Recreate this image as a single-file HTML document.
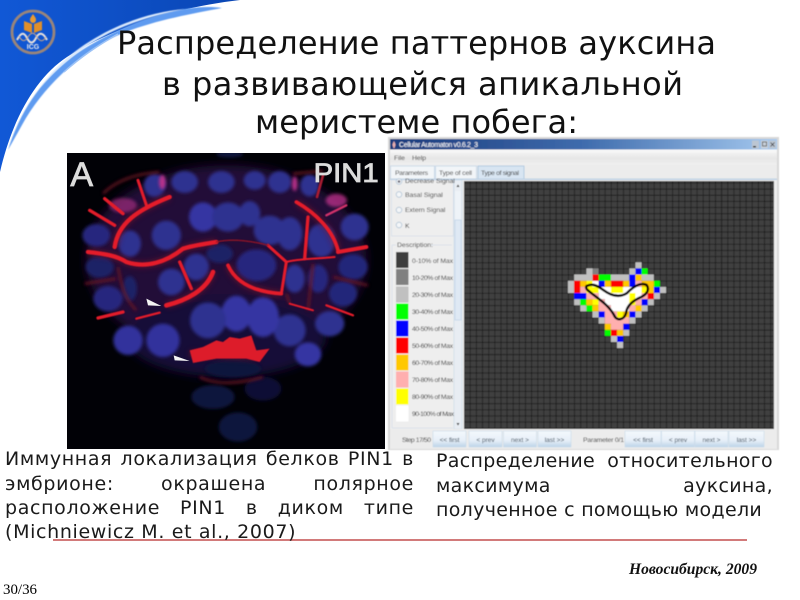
<!DOCTYPE html>
<html lang="ru"><head><meta charset="utf-8"><title>Распределение паттернов ауксина</title>
<style>
html,body{margin:0;padding:0;background:#fff;width:800px;height:600px;overflow:hidden}
svg{position:absolute;left:0;top:0}
.t{font-family:"DejaVu Sans","Liberation Sans",sans-serif;fill:#111;filter:blur(.35px)}
.s{font-family:"Liberation Sans",sans-serif;font-size:6.8px;fill:#333}
.b{font-family:"Liberation Sans",sans-serif;font-size:6.5px;fill:#345;text-anchor:middle}
.j{position:absolute;font-family:"DejaVu Sans","Liberation Sans",sans-serif;font-size:19px;letter-spacing:.65px;line-height:20px;color:#1a1a1a;text-align:justify;text-align-last:justify;white-space:nowrap;filter:blur(.35px)}
.r{letter-spacing:.32px}
</style></head><body>
<svg width="800" height="600" viewBox="0 0 800 600" xmlns="http://www.w3.org/2000/svg">
<defs>
<linearGradient id="bg" x1="0" y1="0" x2="1" y2="0"><stop offset="0" stop-color="#1158d6"/><stop offset="1" stop-color="#0a46b4"/></linearGradient>
<linearGradient id="tb" x1="0" y1="0" x2="1" y2="0"><stop offset="0" stop-color="#1a3a7c"/><stop offset=".5" stop-color="#3f6cad"/><stop offset="1" stop-color="#a5c9ef"/></linearGradient>
<linearGradient id="mb" x1="0" y1="0" x2="0" y2="1"><stop offset="0" stop-color="#fafafa"/><stop offset=".6" stop-color="#e6e6e6"/><stop offset="1" stop-color="#efefef"/></linearGradient>
<linearGradient id="bt" x1="0" y1="0" x2="0" y2="1"><stop offset="0" stop-color="#f4f8fc"/><stop offset=".6" stop-color="#e6eff8"/><stop offset="1" stop-color="#bcd3e8"/></linearGradient>
<pattern id="gr" x="0" y="0" width="6.13" height="6.13" patternUnits="userSpaceOnUse" patternTransform="translate(568 262.3)">
<rect width="6.13" height="6.13" fill="#404040"/><path d="M0 0H6.13M0 0V6.13" stroke="#181818" stroke-width="1.4"/></pattern>
<filter id="b1" x="-30%" y="-30%" width="160%" height="160%"><feGaussianBlur stdDeviation="4.5"/></filter>
<filter id="b2" x="-30%" y="-30%" width="160%" height="160%"><feGaussianBlur stdDeviation="1.6"/></filter>
<filter id="b3" x="-50%" y="-50%" width="200%" height="200%"><feGaussianBlur stdDeviation="14"/></filter>
<filter id="b4" x="-30%" y="-30%" width="160%" height="160%"><feGaussianBlur stdDeviation="9"/></filter>
<filter id="sb"><feGaussianBlur stdDeviation=".4"/></filter>
</defs>

<path d="M0 0H240C170 8 110 30 67 57C35 78 12 120 0 172Z" fill="url(#bg)"/>
<path d="M222 8C190 14 145 22 112 38C78 55 42 88 22 125L8 150C22 105 48 72 82 50C122 25 180 2 222 8Z" fill="#5f9bf0" filter="url(#sb)"/>
<path d="M185 9C150 16 118 26 90 44C72 56 55 70 40 88C58 62 82 44 110 30C135 18 160 11 185 9Z" fill="#d8e8fc" filter="url(#sb)"/>
<path d="M118 34C100 44 82 56 64 72" stroke="#9cc2f6" stroke-width="1.5" fill="none"/>

<g filter="url(#sb)">
<circle cx="33" cy="32" r="21" fill="none" stroke="#9a857a" stroke-width="2.8"/>
<path d="M24 21l8 3v9l-8-3zM42 21l-8 3v9l8-3z" fill="#e08f2c"/>
<path d="M33 14c2 3 3 4 3 6a3 3 0 0 1-6 0c0-2 1-3 3-6z" fill="#e89a30"/>
<path d="M17 40c4-8 7-8 10-2s6 6 9 0 7-6 11 2" fill="none" stroke="#e8e2de" stroke-width="2"/>
<path d="M19 36c3 6 6 6 9 1s6-5 9 0 6 5 9 0" fill="none" stroke="#c9a68a" stroke-width="1"/>
<text x="33" y="49" text-anchor="middle" font-family="Liberation Sans,sans-serif" font-size="7" font-weight="bold" fill="#eee">ICG</text>
</g>

<g class="t" font-size="32">
<text x="117" y="54" textLength="599" lengthAdjust="spacing">Распределение паттернов ауксина</text>
<text x="162" y="95" textLength="521" lengthAdjust="spacing">в развивающейся апикальной</text>
<text x="255" y="133" textLength="323" lengthAdjust="spacing">меристеме побега:</text>
</g>

<!-- micrograph -->
<rect x="67" y="153" width="318" height="296" fill="#010106"/>
<svg x="67" y="153" width="318" height="296" viewBox="22 8 954 888">
<g filter="url(#b3)">
<ellipse cx="500" cy="330" rx="420" ry="285" fill="#221038"/>
<ellipse cx="500" cy="560" rx="300" ry="120" fill="#140c38"/>
</g>
<g fill="#2f3190" filter="url(#b1)">
<ellipse cx="285" cy="105" rx="32" ry="35"/><ellipse cx="375" cy="95" rx="40" ry="33"/><ellipse cx="485" cy="95" rx="40" ry="33"/><ellipse cx="585" cy="90" rx="33" ry="28"/><ellipse cx="660" cy="95" rx="35" ry="33"/><ellipse cx="750" cy="105" rx="28" ry="33"/><ellipse cx="885" cy="230" rx="42" ry="40"/><ellipse cx="785" cy="270" rx="42" ry="50"/><ellipse cx="880" cy="350" rx="44" ry="38" fill="#24267a"/><ellipse cx="850" cy="430" rx="42" ry="38" fill="#24267a"/><ellipse cx="810" cy="520" rx="44" ry="38"/><ellipse cx="745" cy="612" rx="40" ry="36" fill="#3436a2"/><ellipse cx="690" cy="540" rx="48" ry="48"/><ellipse cx="610" cy="500" rx="48" ry="60" fill="#3436a2"/><ellipse cx="530" cy="490" rx="45" ry="54" fill="#3436a2"/><ellipse cx="445" cy="510" rx="54" ry="54"/><ellipse cx="310" cy="570" rx="50" ry="50" fill="#31339c"/><ellipse cx="205" cy="570" rx="44" ry="44" fill="#31339c"/><ellipse cx="145" cy="445" rx="44" ry="38" fill="#26287e"/><ellipse cx="120" cy="350" rx="42" ry="32" fill="#1e2066"/><ellipse cx="110" cy="255" rx="42" ry="34" fill="#26287e"/><ellipse cx="210" cy="280" rx="34" ry="40"/><ellipse cx="320" cy="255" rx="44" ry="44"/><ellipse cx="430" cy="200" rx="42" ry="44" fill="#3436a2"/><ellipse cx="505" cy="200" rx="48" ry="44"/><ellipse cx="570" cy="190" rx="32" ry="38"/><ellipse cx="630" cy="240" rx="48" ry="44"/><ellipse cx="690" cy="250" rx="38" ry="50"/><ellipse cx="410" cy="350" rx="38" ry="40"/><ellipse cx="335" cy="395" rx="40" ry="40"/><ellipse cx="210" cy="415" rx="22" ry="38" fill="#1e2066"/><ellipse cx="590" cy="345" rx="60" ry="48" fill="#26287e"/><ellipse cx="480" cy="310" rx="40" ry="28" fill="#1e2066"/><ellipse cx="705" cy="385" rx="30" ry="42"/><ellipse cx="775" cy="385" rx="30" ry="42" fill="#26287e"/><ellipse cx="460" cy="740" rx="65" ry="36" fill="#11133c"/><ellipse cx="610" cy="715" rx="55" ry="36" fill="#0e1034"/><ellipse cx="535" cy="830" rx="58" ry="44" fill="#11133c"/><ellipse cx="520" cy="655" rx="84" ry="26" fill="#11133c"/><ellipse cx="510" cy="12" rx="40" ry="10" fill="#11133c"/>
</g>
<g fill="#b8308a" filter="url(#b1)"><ellipse cx="190" cy="165" rx="42" ry="22" opacity=".6"/><ellipse cx="308" cy="95" rx="10" ry="22"/><ellipse cx="705" cy="100" rx="8" ry="22"/><ellipse cx="830" cy="150" rx="32" ry="20" opacity=".8"/></g>
<g fill="none" stroke="#7a1428" filter="url(#b4)" stroke-width="20" opacity=".55">
<path d="M165 290C175 220 230 180 330 140M85 305C130 310 170 315 200 335C260 355 320 335 370 295C400 285 440 280 470 275M320 465C380 450 440 420 460 365M505 345C530 400 590 425 665 430M710 155C770 190 820 240 835 300"/>
<path d="M390 610L600 620"/>
</g>
<g fill="none" stroke="#6c1224" filter="url(#b1)" stroke-width="7">
<path d="M130 130C170 90 230 70 300 65M75 400L170 385M820 380L925 405M420 680C470 705 540 700 610 680M700 70L790 62"/>
<path d="M175 350C185 400 190 440 230 480M680 430L690 460M760 340L745 480"/>
</g>
<g fill="none" stroke="#e41c2c" stroke-linecap="round" filter="url(#b2)">
<path d="M165 290C175 220 230 180 330 140" stroke-width="13"/>
<path d="M235 90L262 170" stroke-width="9"/><path d="M135 145L190 190" stroke-width="10"/><path d="M90 180L165 225" stroke-width="10"/>
<path d="M85 305C130 310 170 315 200 335C260 355 320 335 370 295C400 285 440 280 470 275" stroke-width="13"/>
<path d="M360 335L395 415" stroke-width="10"/>
<path d="M320 465C380 450 440 420 460 365" stroke-width="14"/>
<path d="M505 345C530 400 590 425 665 430" stroke-width="11"/>
<path d="M625 285L680 335L665 430" stroke-width="9"/>
<path d="M680 335C710 325 780 325 825 320" stroke-width="6"/>
<path d="M735 325L745 200" stroke-width="10"/>
<path d="M710 155C770 190 820 240 835 300" stroke-width="11"/>
<path d="M835 305L920 290" stroke-width="12"/>
<path d="M115 503L190 485" stroke-width="10"/><path d="M230 505L300 487" stroke-width="7"/>
<path d="M690 460L760 480" stroke-width="6"/><path d="M800 465L880 495" stroke-width="7"/>
<path d="M470 275C520 262 590 275 625 285" stroke-width="4" stroke="#8e1626"/>
<path d="M790 75L772 140" stroke-width="8" stroke="#a81a30"/>
<path d="M860 165L800 195" stroke-width="7" stroke="#d0306a"/>
</g>
<path d="M390 600L430 590L470 570L490 575L510 560L540 565L575 555L590 600L630 595L600 635L560 625L470 625L400 638Z" fill="#dd1e2c" filter="url(#b2)"/>
<path d="M260 445L305 467L265 465ZM342 615L390 632L345 630Z" fill="#f4f4f4"/>
<g font-family="Liberation Sans,sans-serif" fill="#dcdcdc" stroke="#dcdcdc" stroke-width="2.500" style="filter:blur(.7px)">
<text x="32" y="107" font-size="102">A</text>
<text x="762" y="95" font-size="80" textLength="195" lengthAdjust="spacingAndGlyphs">PIN1</text>
</g>
</svg>

<!-- application window -->
<g filter="url(#sb)">
<rect x="388" y="137" width="391" height="313" fill="#d8d8d8"/>
<rect x="390" y="139" width="387" height="310" fill="#eeeeee"/>
<rect x="390" y="139" width="387" height="10.500" fill="url(#tb)"/>
<path d="M394 141c1 2 1.500 3 1.500 4l-1 3h-1l-1-3c0-1 .5-2 1.500-4z" fill="#e8b0b0"/>
<text x="399" y="147" font-family="Liberation Sans,sans-serif" font-size="7" fill="#fff" textLength="79">Cellular Automaton v0.6.2_3</text>
<rect x="752" y="140.500" width="7" height="8" fill="#bcc6d2"/><rect x="753" y="146" width="3" height="1.500" fill="#222"/>
<rect x="761" y="140.500" width="7" height="8" fill="#c8d0da"/><rect x="762.500" y="142" width="4" height="4" fill="none" stroke="#555" stroke-width=".8"/>
<rect x="769" y="140.500" width="7" height="8" fill="#bcc6d2"/><path d="M770.500 142.500l4 4m0-4l-4 4" stroke="#333" stroke-width=".8"/>
<rect x="390" y="149.500" width="387" height="15" fill="url(#mb)"/>
<text x="394" y="160" class="s">File</text><text x="412" y="160" class="s">Help</text>
<rect x="390" y="165" width="387" height="14" fill="#ececec"/>
<rect x="390.500" y="166" width="44" height="13" fill="#f2f5f8" stroke="#c3d5e6" stroke-width=".8"/>
<rect x="435.500" y="166" width="41" height="13" fill="#f2f5f8" stroke="#c3d5e6" stroke-width=".8"/>
<rect x="478" y="166" width="46" height="13" fill="#d8e5f2" stroke="#a8c4de" stroke-width=".8"/>
<text x="395" y="175" class="s" textLength="33">Parameters</text><text x="439" y="175" class="s" textLength="33">Type of cell</text><text x="481" y="175" class="s" textLength="38">Type of signal</text>
<rect x="390" y="178.500" width="387" height="1.500" fill="#bdd1e4"/>
<rect x="391" y="180" width="63" height="249" fill="#eeeeee"/>
<rect x="391.500" y="180" width="62" height="56" fill="none" stroke="#d5deea" stroke-width=".8"/>
<rect x="454" y="180" width="8" height="249" fill="#e8edf3" stroke="#c7d7e6" stroke-width=".6"/>
<rect x="455" y="191" width="6" height="34" fill="#eef3f8"/>
<rect x="455" y="220" width="6" height="100" fill="#dfe9f4" stroke="#b9cfe4" stroke-width=".6"/>
<path d="M456.500 187l1.500-2.500 1.500 2.500zM456.500 423l1.500 2.500 1.500-2.500z" fill="#222"/>
<g fill="#f4f6f8" stroke="#b0c4d6" stroke-width=".8"><circle cx="399" cy="181.500" r="2.800"/><circle cx="399" cy="194.500" r="2.800"/><circle cx="399" cy="210" r="2.800"/><circle cx="399" cy="225" r="2.800"/></g>
<circle cx="399" cy="181.500" r="1.300" fill="#667"/>
<text x="405" y="183" class="s">Decrease Signal</text><text x="405" y="197" class="s">Basal Signal</text><text x="405" y="212" class="s">Extern Signal</text><text x="405" y="228" class="s">K</text>
<text x="397" y="247" class="s">Description:</text>
<path d="M392 245h4M431 245h21M392 245V428M392 428H453" stroke="#d5deea" stroke-width=".8" fill="none"/>
<rect x="396" y="252" width="12.500" height="16" fill="#3c3c3c"/>
<rect x="396" y="269" width="12.500" height="16" fill="#808080"/>
<rect x="396" y="286.500" width="12.500" height="16" fill="#c0c0c0"/>
<rect x="396" y="303.500" width="12.500" height="16" fill="#00ff00"/>
<rect x="396" y="320.500" width="12.500" height="16" fill="#0000ff"/>
<rect x="396" y="337.500" width="12.500" height="16" fill="#ff0000"/>
<rect x="396" y="354.500" width="12.500" height="16" fill="#ffc800"/>
<rect x="396" y="371.500" width="12.500" height="16" fill="#ffafaf"/>
<rect x="396" y="388.500" width="12.500" height="16" fill="#ffff00"/>
<rect x="396" y="405.500" width="12.500" height="16" fill="#ffffff"/>
<g class="s"><text x="412" y="263" textLength="41">0-10%  of Max</text><text x="412" y="280" textLength="41">10-20%  of Max</text><text x="412" y="297" textLength="41">20-30%  of Max</text><text x="412" y="314" textLength="41">30-40%  of Max</text><text x="412" y="331" textLength="41">40-50%  of Max</text><text x="412" y="348" textLength="41">50-60%  of Max</text><text x="412" y="365" textLength="41">60-70%  of Max</text><text x="412" y="382" textLength="41">70-80%  of Max</text><text x="412" y="399" textLength="41">80-90%  of Max</text><text x="412" y="416" textLength="42">90-100%  of Max</text></g>
<rect x="464" y="181" width="310" height="248" fill="url(#gr)"/>
<g transform="translate(568 262.300) scale(6.13)">
<path fill="#ffffff" d="M3 3h2v2h-2zM5 4h7v2h-7zM6 6h5v1h-5zM7 7h3v1h-3z"/>
<path fill="#c0c0c0" d="M11 0h1v1h-1zM3 1h1v1h-1zM10 1h1v1h-1zM1 2h3v1h-3zM7 2h3v1h-3zM12 2h2v1h-2zM0 3h1v2h-1zM15 4h1v1h-1zM14 5h1v1h-1zM1 6h1v1h-1zM13 6h1v1h-1zM12 7h1v1h-1zM4 8h1v1h-1zM11 8h1v1h-1zM5 9h1v1h-1zM10 9h1v1h-1zM9 11h1v1h-1zM7 12h1v1h-1zM8 13h1v1h-1zM2 7h1v1h-1z"/>
<path fill="#808080" d="M4 1h1v1h-1z"/>
<path fill="#00ff00" d="M12 1h1v1h-1zM5 2h2v1h-2zM14 3h1v1h-1zM2 6h1v1h-1zM3 7h1v1h-1zM6 11h1v1h-1z"/>
<path fill="#0000ff" d="M11 1h1v1h-1zM10 2h1v1h-1zM5 3h1v1h-1zM10 3h1v1h-1zM14 4h1v1h-1zM1 5h2v1h-2zM12 6h1v1h-1zM5 8h1v1h-1zM10 8h1v1h-1zM9 10h1v1h-1zM8 12h1v1h-1z"/>
<path fill="#ff0000" d="M4 2h1v1h-1zM1 3h1v2h-1zM7 3h2v1h-2zM13 5h1v1h-1zM7 11h1v1h-1z"/>
<path fill="#ffc800" d="M11 2h1v1h-1zM2 3h1v1h-1zM6 3h1v1h-1zM9 3h1v1h-1zM12 3h2v1h-2zM13 4h1v1h-1zM3 6h1v1h-1zM4 7h1v1h-1zM9 8h1v1h-1zM11 7h1v1h-1zM6 10h1v1h-1zM8 11h1v1h-1z"/>
<path fill="#ffff00" d="M3 4h2v1h-2zM7 4h2v1h-2zM12 4h1v1h-1zM4 6h1v1h-1zM8 8h1v1h-1zM10 6h1v1h-1zM10 5h1v1h-1zM3 3h1v1h-1z"/>
<path fill="#ffafaf" d="M11 3h1v1h-1zM2 4h1v1h-1zM3 5h2v1h-2zM12 5h1v1h-1zM5 6h1v1h-1zM11 6h1v1h-1zM5 7h2v1h-2zM10 7h1v1h-1zM6 8h2v1h-2zM6 9h4v1h-4zM7 10h2v1h-2z"/>
</g>
<path transform="translate(550 250) scale(.3333)" d="M110 108C125 100 140 105 160 120C180 135 205 145 230 130C245 115 270 95 290 105C300 120 290 135 265 145C245 155 230 170 228 190C222 210 200 215 192 195C175 165 150 150 125 130C112 120 105 115 110 108Z" fill="none" stroke="#000" stroke-width="7.500"/>
<rect x="390" y="429" width="387" height="20" fill="#ececec"/>
<text x="402" y="442" class="s" textLength="29">Step 17/50</text><text x="583" y="442" class="s" textLength="41">Parameter 0/1</text>
<g stroke="#c9dbea" stroke-width=".6" fill="url(#bt)">
<rect x="433" y="431" width="33" height="16"/><rect x="469" y="431" width="33" height="16"/><rect x="503.500" y="431" width="33" height="16"/><rect x="538" y="431" width="33" height="16"/>
<rect x="625" y="431" width="36" height="16"/><rect x="661.500" y="431" width="33" height="16"/><rect x="695" y="431" width="33" height="16"/><rect x="729" y="431" width="35" height="16"/>
</g>
<text x="449.500" y="442" class="b">&lt;&lt; first</text><text x="485.500" y="442" class="b">&lt; prev</text><text x="520" y="442" class="b">next &gt;</text><text x="554.500" y="442" class="b">last &gt;&gt;</text>
<text x="643" y="442" class="b">&lt;&lt; first</text><text x="678" y="442" class="b">&lt; prev</text><text x="711.500" y="442" class="b">next &gt;</text><text x="746.500" y="442" class="b">last &gt;&gt;</text>
</g>

<rect x="53" y="539" width="694" height="2" fill="#d27a7a"/>
<text x="629" y="574" font-family="Liberation Serif,serif" font-style="italic" font-weight="bold" font-size="15.500" fill="#111" textLength="128" lengthAdjust="spacingAndGlyphs">Новосибирск, 2009</text>
<text x="3" y="594" font-family="Liberation Serif,serif" font-size="15" fill="#000" textLength="34" lengthAdjust="spacingAndGlyphs">30/36</text>
</svg>

<div class="j" style="left:5px;top:449px;width:409px">Иммунная локализация белков PIN1 в</div>
<div class="j" style="left:5px;top:474px;width:409px">эмбрионе: окрашена полярное</div>
<div class="j" style="left:5px;top:498px;width:409px">расположение PIN1 в диком типе</div>
<div class="j" style="left:5px;top:522px;text-align-last:left">(Michniewicz M. et al., 2007)</div>
<div class="j r" style="left:436px;top:451px;width:337px">Распределение относительного</div>
<div class="j r" style="left:436px;top:476px;width:337px">максимума ауксина,</div>
<div class="j r" style="left:436px;top:500px;text-align-last:left">полученное с помощью модели</div>
</body></html>
